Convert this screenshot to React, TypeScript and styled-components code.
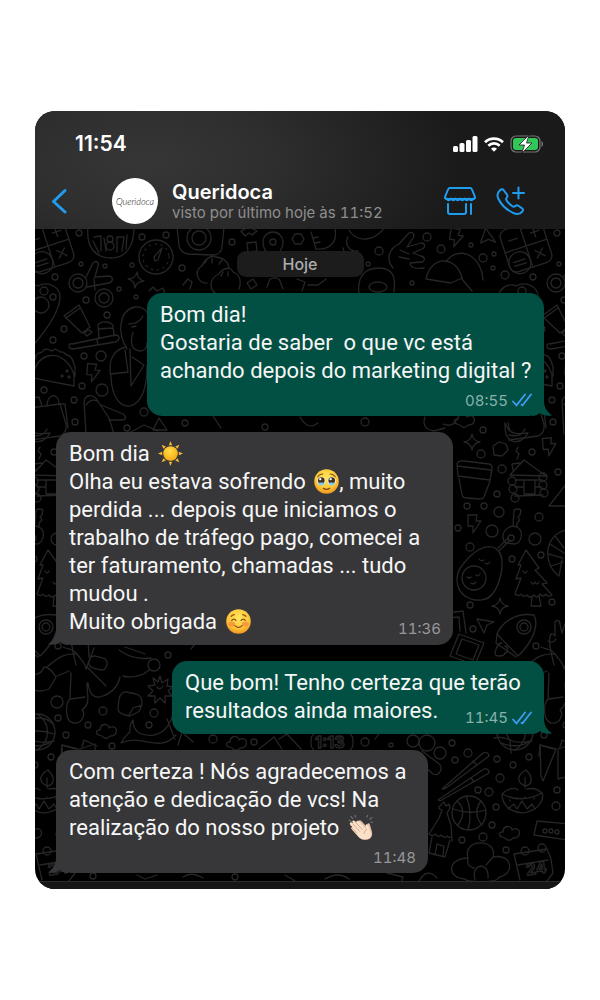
import React from "react";
import styled, { createGlobalStyle } from "styled-components";

const GlobalStyle = createGlobalStyle`
  * { box-sizing: border-box; }
  body {
    margin: 0;
    background: #fff;
    font-family: Inter, "Liberation Sans", sans-serif;
    -webkit-font-smoothing: antialiased;
  }
`;

const Page = styled.main`
  padding: 111px 35px;
`;

const Phone = styled.section`
  display: flex;
  flex-direction: column;
  overflow: hidden;
  border-radius: 20px;
  background: #000;
`;

const Header = styled.header`
  display: flex;
  flex-direction: column;
  height: 118px;
  background: radial-gradient(ellipse 320px 150px at 110px 50px, #363636 0%, #2e2e2e 40%, #1a1a1a 100%);
`;

const StatusBar = styled.div`
  display: flex;
  align-items: center;
  justify-content: space-between;
  height: 64px;
  padding: 2px 21px 0 40px;
`;

const Clock = styled.time`
  color: #fff;
  font-size: 21px;
  font-weight: 600;
  line-height: 24px;
`;

const StatusIcons = styled.div`
  display: flex;
  align-items: center;
  gap: 6px;
`;

const NavBar = styled.nav`
  display: flex;
  align-items: center;
  height: 52px;
  padding: 0 39px 0 14px;
`;

const IconButton = styled.button`
  display: flex;
  flex: none;
  padding: 0;
  border: 0;
  background: none;
  color: #1f9cee;
  cursor: pointer;
`;

const Avatar = styled.div`
  display: flex;
  flex: none;
  align-items: center;
  justify-content: center;
  width: 46px;
  height: 46px;
  margin-left: 41px;
  border-radius: 50%;
  background: #fff;
  color: #111;
  font-family: Lato, "Liberation Sans", sans-serif;
  font-size: 9px;
  font-style: italic;
  font-weight: 300;
`;

const Contact = styled.div`
  flex: 1;
  min-width: 0;
  margin: 2px 0 0 14px;
`;

const Name = styled.h1`
  margin: 0;
  color: #fff;
  font-size: 20px;
  font-weight: 600;
  line-height: 22px;
`;

const LastSeen = styled.p`
  margin: 0;
  color: #8e8e90;
  font-size: 15px;
  font-variant-numeric: tabular-nums;
  line-height: 20px;
  white-space: nowrap;
`;

const Actions = styled.div`
  display: flex;
  gap: 20px;
`;

const Chat = styled.div`
  position: relative;
  overflow: hidden;
  padding: 22px 21px 8px;
`;

const Wallpaper = styled.svg`
  position: absolute;
  inset: 0;
  width: 100%;
  height: 100%;
`;

const Thread = styled.div`
  position: relative;
  display: flex;
  flex-direction: column;
  gap: 16px;
`;

const DayLabel = styled.div`
  align-self: center;
  width: 127px;
  border-radius: 9px;
  background: #1c1c1c;
  color: #adadad;
  font-size: 16px;
  font-weight: 500;
  line-height: 26px;
  text-align: center;
`;

const Bubble = styled.article<{ $sent?: boolean; $width: number }>`
  position: relative;
  display: flow-root;
  align-self: ${(p) => (p.$sent ? "flex-end" : "flex-start")};
  width: ${(p) => p.$width}px;
  max-width: 100%;
  padding: 8px 12px 5px 13px;
  border-radius: 15px;
  background: ${(p) => (p.$sent ? "#025044" : "#373739")};
  color: ${(p) => (p.$sent ? "#025044" : "#373739")};
`;

const Body = styled.p`
  display: flow-root;
  margin: 0;
  color: #f6f6f6;
  font-family: Roboto, Inter, sans-serif;
  font-size: 22px;
  line-height: 28px;
  white-space: pre-wrap;
`;

const Line = styled.span`
  display: block;
`;

/* Sent time: on a row of its own, or floated into the end of the last line. */
const Meta = styled.span<{ $inline?: boolean; $sent?: boolean }>`
  display: flex;
  align-items: center;
  justify-content: flex-end;
  gap: 4px;
  height: 22px;
  margin-top: ${(p) => (p.$inline ? "10px" : "4px")};
  ${(p) => (p.$inline ? "float: right;" : "")}
  color: ${(p) => (p.$sent ? "#8ab0aa" : "#98989a")};
  font-family: Inter, sans-serif;
  font-size: 15px;
  font-variant-numeric: tabular-nums;
`;

const TailShape = styled.svg<{ $sent?: boolean }>`
  position: absolute;
  bottom: 0;
  ${(p) => (p.$sent ? "right: -8px;" : "left: -8px; transform: scaleX(-1);")}
`;

const EmojiIcon = styled.svg`
  width: 25px;
  height: 25px;
  margin-left: 3px;
  vertical-align: -5px;
`;

const Composer = styled.div`
  height: 8px;
  border-top: 1px solid #2c2c2c;
  background: #161616;
`;

const Tail = ({ sent }: { sent?: boolean }) => (
  <TailShape $sent={sent} width="24" height="24" viewBox="0 0 24 24" aria-hidden="true">
    <path d="M4 4h12v5c0 6 3 11 8 14.500c-5 .5-9 0-12-2.500c-2 2-5 3-8 3z" fill="currentColor" />
  </TailShape>
);

const Ticks = () => (
  <svg width="20" height="14" viewBox="0 0 20 14" fill="none" stroke="#3d9bf0" strokeWidth="1.8" strokeLinecap="round" role="img" aria-label="Lida">
    <path d="M1 8.500l3.500 3.800L13 1.500M9.500 11.800l1 .5L19 1.500" />
  </svg>
);

const Sun = () => (
  <EmojiIcon viewBox="0 0 24 24" role="img" aria-label="sol">
    <defs>
      <radialGradient id="sun" cx="45%" cy="35%">
        <stop offset="0" stopColor="#ffe04a" />
        <stop offset="1" stopColor="#fbb41c" />
      </radialGradient>
    </defs>
    {[0, 45, 90, 135, 180, 225, 270, 315].map((a) => (
      <path key={a} d="M12 0l1.600 4h-3.200z" fill="#f6b83c" transform={`rotate(${a} 12 12)`} />
    ))}
    <circle cx="12" cy="12" r="7" fill="url(#sun)" />
  </EmojiIcon>
);

const FaceGradient = ({ id }: { id: string }) => (
  <defs>
    <radialGradient id={id} cx="50%" cy="35%" r="65%">
      <stop offset="0" stopColor="#ffe65c" />
      <stop offset=".65" stopColor="#fdc83a" />
      <stop offset="1" stopColor="#ee931f" />
    </radialGradient>
  </defs>
);

const Pleading = () => (
  <EmojiIcon viewBox="0 0 24 24" role="img" aria-label="rosto segurando as lágrimas">
    <FaceGradient id="face-a" />
    <circle cx="12" cy="12" r="11.800" fill="url(#face-a)" />
    <path d="M3.500 7.500c1.200-1.800 3-2.700 5-2.700M20.500 7.500c-1.200-1.800-3-2.700-5-2.700" stroke="#8a5417" strokeWidth="1" fill="none" strokeLinecap="round" />
    {[7, 17].map((x) => (
      <g key={x}>
        <circle cx={x} cy="11.500" r="3.900" fill="#f4fbff" />
        <circle cx={x} cy="11" r="3.200" fill="#43301e" />
        <circle cx={x - 1} cy="9.800" r="1.100" fill="#fff" />
        <path d={`M${x - 3.4} 13.500q3.400-1 6.800 0q-1 2.300-3.400 2.300t-3.400-2.300z`} fill="#7bc9f2" />
      </g>
    ))}
    <path d="M9 18.500q3 2.200 6 0" stroke="#7c3d12" strokeWidth="1.200" fill="none" strokeLinecap="round" />
  </EmojiIcon>
);

const Smiling = () => (
  <EmojiIcon viewBox="0 0 24 24" role="img" aria-label="rosto sorridente">
    <FaceGradient id="face-b" />
    <circle cx="12" cy="12" r="11.800" fill="url(#face-b)" />
    <ellipse cx="5.500" cy="14.500" rx="3.200" ry="2.400" fill="#f5763c" opacity=".6" />
    <ellipse cx="18.500" cy="14.500" rx="3.200" ry="2.400" fill="#f5763c" opacity=".6" />
    <path d="M5.500 11q2-2.800 4 0M14.500 11q2-2.800 4 0M8.500 16q3.500 3.400 7 0M5 7q1.500-1.500 3-1.500M19 7q-1.500-1.500-3-1.500" stroke="#8a4a14" strokeWidth="1.200" fill="none" strokeLinecap="round" />
  </EmojiIcon>
);

const Clapping = () => (
  <EmojiIcon viewBox="0 0 24 24" role="img" aria-label="palmas">
    <path d="M1 5l2 1M3 1.500l1.500 2M7 0v2M18 2l1-1.800M21 4l2-1.500M22 7h1.800" stroke="#737375" strokeWidth="1.100" strokeLinecap="round" />
    <path d="M10 5.500c1-1 2-.5 3 .5l6 6.500-.3-3.500c0-1.500 1.800-1.500 2.300 0l2 7c.8 4-1 7-4.500 7.500z" fill="#e7bfa4" />
    <path d="M2 9c-1-1.500.7-2.700 1.800-1.700L5 8.500 4.200 6.800C3.800 5.200 5.800 4.800 6.800 6l1.200 1.200C7.700 5.500 9.700 5 10.700 6.300l6.800 7.500-.5-3.600c0-1.700 2-1.700 2.600-.2l2.200 7.200c1 4-2.600 6.800-6.300 6.600-2.500-.2-4.200-1.500-6-3.500l-6-6.600c-1.200-1.500.3-2.700 1.500-1.700L2.500 10z" fill="#fbe0ca" />
    <path d="M4.500 8.500l6.500 7M7.500 7.200l6.200 6.700M4 12.500l4.500 4.800M18 13.800q-2.500 1-2.500 3.700" stroke="#cf9f81" strokeWidth=".8" fill="none" strokeLinecap="round" />
  </EmojiIcon>
);

const bubblesOfAir: [number, number, number][] = [
  [44, 4, 3], [46, 35, 2], [20, 48, 3], [97, 36, 2], [107, 8, 3], [131, 6, 3], [147, 39, 3], [70, 37, 2], [197, 13, 3],
  [392, 8, 4], [406, 20, 4], [344, 22, 4], [333, 35, 2], [377, 54, 2], [436, 16, 2], [448, 29, 4], [459, 25, 2],
  [458, 39, 2], [470, 46, 4], [84, 60, 2], [101, 68, 2], [51, 71, 3], [72, 86, 3], [29, 100, 3], [18, 111, 3],
  [49, 127, 3], [66, 127, 5], [9, 161, 3], [47, 157, 3], [67, 161, 6], [39, 171, 3], [40, 193, 3], [92, 199, 3],
  [109, 183, 4], [448, 201, 3], [446, 225, 4], [467, 240, 4], [497, 223, 3], [523, 243, 3], [462, 265, 3],
  [432, 277, 3], [449, 277, 3], [464, 283, 5], [504, 288, 4], [423, 299, 3], [457, 302, 6], [500, 310, 6],
  [435, 318, 4], [506, 326, 3], [477, 330, 3], [435, 376, 3], [517, 373, 3], [438, 400, 3], [501, 417, 3],
  [133, 426, 3], [22, 473, 6], [68, 482, 4], [23, 489, 3], [53, 496, 3], [31, 506, 3], [119, 484, 4], [114, 496, 3],
  [77, 517, 3], [178, 510, 4], [219, 513, 3], [330, 513, 4], [356, 516, 2], [417, 514, 3], [433, 524, 4],
  [420, 531, 3], [462, 530, 3], [478, 536, 3], [494, 528, 3], [465, 549, 4], [454, 563, 4], [443, 561, 3],
  [461, 578, 3], [522, 561, 3], [521, 577, 4], [457, 596, 3], [448, 608, 4], [427, 611, 3], [471, 621, 3],
  [58, 647, 3], [200, 648, 3], [230, 198, 3], [150, 194, 3], [330, 193, 4],
];

const at = (x: number, y: number, r = 0) => `translate(${x} ${y}) rotate(${r})`;
const BOLT = "M-6-8h9l-1 6h5L-1 10l0-7h-5z";
const SPARKLE = "M0-8q1 7 8 8q-7 1-8 8q-1-7-8-8q7-1 8-8z";
const CLOUD = "M-8 5c-4-1-3-6 1-5c0-7 9-7 9-2c4-3 9 0 7 5c-1 3-4 3-6 3c-2 3-6 3-8 0z";
const PLANE = "M-8-6L9-3L2 0L-1 8z";

/* One repeat of the doodle wallpaper. */
const Doodles = () => (
  <g id="doodles">
    {bubblesOfAir.map(([x, y, r]) => (
      <circle key={`${x}-${y}`} cx={x} cy={y} r={r} />
    ))}
    {/* calculator */}
    <g transform={at(491, 17, -18)}>
      <rect x="-22" y="-22" width="44" height="44" rx="7" />
      <path d="M0-22v44M-22 0h44M-15-10h9M8-11h9M12-15v9M7 7l8 8M15 7l-8 8M-17 12h12M-17 16h12" />
      <circle cx="-11" cy="14" r="11" />
    </g>
    {/* drum */}
    <path d="M53-2C51 18 60 29 76 29S99 16 99-2M59 8l7-1v15M58 12l6 12M71 22l-2-13M82 8l7 0-2 14M82 8v15M92 6l-1 14" />
    <circle cx="75" cy="10" r="3" /><circle cx="75" cy="17" r="4" />
    {/* timer */}
    <circle cx="121" cy="28" r="17" /><circle cx="121" cy="28" r="13" strokeDasharray="1 5" />
    <path d="M120 32l-1-4 8-9-4 12z" />
    {/* camera */}
    <path d="M142-3l2 20q2 7 9 8l25 1q8 0 9-8l2-20" />
    <circle cx="164" cy="9" r="12" /><circle cx="164" cy="9" r="7" />
    {/* dumplings */}
    <path d="M172 54c-9 1-14-12-5-17 2-6 10-12 13-9 7 0 13 4 14 11M180 64c-7-6-4-16 4-19 4-7 12-7 14-2 6 2 9 8 6 17M170 34l2-4M177 34v-5M184 35l3-4M186 47l2-4M193 47v-4" />
    {/* pin, nut and box */}
    <path d="M238 31c-8-9-10-12-10-18a10 10 0 0 1 20 0c0 6-3 10-10 18z" /><circle cx="238" cy="13" r="3" />
    <path d="M260 5h6l3 5-3 5h-6l-3-5zM212 14l9-1 1 9-9 1zM206 2l8-4 8 4-5 4-3-2-4 3z" />
    {/* small shapes under the day label */}
    <path d="M212 54l6-4 4 6-6 4zM232 58l3-8q8-3 10 2l3 8M262 50l8 3-3 9" />
    {/* jug, moon, bowl */}
    <path d="M276 3l5 17q9 1 15-4 6-5 4-16M278 9l5-1M280 14l5-1M313 8c-4 8 2 15 10 14c-4 8-14 4-15-3M314 1q6 10 17 9 11-1 19-12" />
    {/* horns hand */}
    <path d="M358 39c-8-10-3-20 6-24l10-11c4-2 6 2 4 5l-6 9 14-4c5 0 4 5 1 6l-9 4 8 3c5 1 4 7-1 6l-10 1c0 5 6 6 14 5M365 21l9 4M364 28l10 2" />
    <path d={BOLT} transform={at(421, 8, 8)} /><path d={PLANE} transform={at(452, 9, 45)} />
    {/* fortune cookies */}
    <path d="M391 50c5-24 30-24 36-1l-11 5zM411 33c10-16 35-10 37 18M427 50l10 12M273 56l10 0 8-6" />
    <path d="M324 65c-2-17 5-26 20-26 14 0 17 9 15 24" /><ellipse cx="343" cy="58" rx="9" ry="5" />
    {/* scissors */}
    <circle cx="43" cy="54" r="9" /><circle cx="43" cy="54" r="5" />
    <circle cx="69" cy="69" r="9" /><circle cx="69" cy="69" r="5" />
    <path d="M51 48l7-14c3-3 6-1 5 3l-3 11 14-1c5 1 4 6 0 7l-22 4M60 61l-1-12" />
    <path d={SPARKLE} transform={at(101, 51, 8)} />
    <path d="M114 62l4-4 4 4 6-3 2 6M148 56l5-6 4 3-2 7" />
    {/* paw */}
    <path d="M-14 72c-2-14 10-18 17-15 11-6 23 2 22 12-1 14-13 32-31 52-6-16-9-37-8-49z" />
    <circle cx="9" cy="62" r="4" /><circle cx="18" cy="68" r="3" /><circle cx="6" cy="76" r="8" />
    {/* tube and toothbrush */}
    <path d="M29 87l15-11 11 22-8 6zM31 89l14-10M49 104l5-3 3 2-5 4z" />
    <path d="M37 115l43-9q4 0 4 3t-4 4l-42 7q-4 0-4-3t3-2zM62 111l1 5M64 109l-1-13q2-4 9-3 5 1 6 4l1 10M63 100l15-1" />
    {/* taco */}
    <path d="M-2 149c2-29 33-30 41-3v11zM1 130c-2-6 5-6 6-7 3-5 7-2 10-1 3-3 6-1 8 1 4-1 5 2 7 3 5 1 6 6 8 12v9" />
    <circle cx="27" cy="147" r="1" /><circle cx="32" cy="142" r="1" /><circle cx="34" cy="148" r="1" />
    <path d={BOLT} transform={at(58, 143, 4)} />
    {/* mouse */}
    <path d="M76 148c-4-18 4-28 15-30M76 148c1 22 10 30 19 29 12-3 17-17 17-41M76 145l17-2-3-22M95 120l1 37 13-21-12-8" />
    {/* head */}
    <path d="M92 120c-11-18-7-39 8-42 13-1 18 12 13 24M94 95c8 0 12-4 14-8M97 98l4-1M98 103c-4 14 0 18 7 19 6 0 7-4 7-8" />
    {/* shuttle and lunchbox */}
    <path d="M51 205l-2-32c1-8 9-8 13-2l12 18 5 16M51 176q5-7 11-4M66 176l22 9c4 3 3 6-1 6l-13 0" />
    <path d="M-4 179l29-4 6 20q1 9-6 12l-29 4M0 179l-2-10 6-1 3 9M12 177c0-12 11-14 12-3M-4 206q12 3 16-6M26 175l4 0 3 24M94 204l15-8 14 6" />
    {/* shapes between the first two messages */}
    <path d="M124 189l-6 12h14zM178 187l8 12M265 188q8 14 18 6M390 188q-4 12 9 14l11-3M408 195q10 4 14-5" />
    <path d={CLOUD} transform={at(430, 190)} />
    <path d="M470 194c-1 24 17 22 23 10M470 194l3 6c5 7 14 4 20 4M473 194l2 8" />
    <path d={SPARKLE} transform={at(437, 213)} /><path d={BOLT} transform={at(514, 217, -5)} />
    <path d="M458 217l6-4 7 2 2 6-6 6-8-1z" />
    {/* flower pot */}
    <path d="M422 235q1-4 7-3l25 3q4 1 3 5l-2 11-32-4zM424 249l3 17q1 3 5 3l13 1q3 0 4-2l6-16M422 237l34 4" />
    {/* log cabin */}
    <path d="M475 246l14-15 22 16zM478 241l-1-6 8-1M482 230l2-5-3-3 2-4M480 251h27M480 258h9M501 258h6M480 267l28-1M489 251h11v14h-11z" />
    {[[477, 252], [478, 260], [480, 269], [508, 248], [508, 256], [509, 264]].map(([x, y]) => (
      <circle key={`${x}-${y}`} cx={x} cy={y} r="4" />
    ))}
    <path d={BOLT} transform={at(439, 294)} />
    {/* key */}
    <path d="M478 297l1-16q4-2 7 0l-1 5-2 2 2 3-3 3 0 4M478 297c-10 2-13 12-7 17l9 1c7-2 9-13 2-17z" />
    <circle cx="476" cy="309" r="3" /><path d="M475 311l-11 11M473 309l-10 10" />
    {/* avocado */}
    <path d="M460 319c-10-5-22 4-31 15-12 13-8 31 7 36 14 4 23-2 28-18 5-15 4-28-4-33zM464 323c7 7 2 38-12 47" />
    <circle cx="439" cy="349" r="12" /><path d="M432 348q2 2 4 0M441 346q2 2 4-1M436 354q3 2 5-1M444 330q2 3 5 1M450 334q3 2 5-1" />
    {/* fir tree */}
    <path d="M491 321l13 18-4 2 12 13-5 1 10 11q-4 3-6-1-3 4-6 0-3 5-6 1-4 4-7 0-4 3-6-1-2 3-6 0l6-16-5 1 5-14-3 0zM497 368l-1 9 10 0-2-10M488 342q2 4 4 0M496 353q2 4 4 0 2 4 4 0" />
    <path d={SPARKLE} transform={at(465, 377)} /><path d={PLANE} transform={at(450, 396)} />
    {/* rocket */}
    <path d="M462 405c4-10 17-22 37-19 6 12-4 30-16 41zM462 405l-1 9 20 14M467 414c-5 0-6 6-7 10-1 4 9 4 10 0 4-1 3-7 0-7" />
    <circle cx="489" cy="398" r="7" /><circle cx="489" cy="398" r="4" />
    <path d="M424 405l25 9-9 22-25-9zM427 410l17 6-6 15-17-6zM413 384l15-2 3 22M414 389l10-1 1 14" />
    {/* croissant, hand, tent */}
    <path d="M532 301c-23 4-25 34-8 46l3-16M515 315l14 9M514 325l14 4M520 307l9 12M516 337l12-4M514 277l18-23M514 277h22" />
    <path d="M519 436c-3-14-6-22-4-28 0-4 4-4 5-1l0-13c0-4 5-3 5 1l2 9 3-9c2-3 5-1 4 2l-3 12 1 19M513 412q5 3 8-2" />
    {/* runner */}
    <path d="M-2 446q9-1 11-8 6 0 12 10l-7 12q-11 4-16 0M22 447l12-5M12 438C24 428 29 424 42 425c-2-4-6-4-14-7M42 425c5 7 9 10 9 15l8-21M36 444l-1 26c-5 5-5 22 3 24 11 1 12-10 9-13 9-7 5-13 5-27M36 470l14-2M53 454q2 16 12 14 17-5 20-20M52 438l19 19M88 447c12 3 22-2 26-6M84 421c8 6 18 10 32 8M90 418l20 7" />
    <circle cx="119" cy="436" r="6" />
    <rect x="54" y="428" width="18" height="12" rx="5" transform="rotate(15 63 434)" />
    <path d="M125 447l2 7 6-4-1 7 6 1-5 4 4 5-7 0 0 7-5-5-5 5 0-7-7 0 5-5-5-5 7-1-2-7 5 4zM122 458q3 4 6-1" />
    <path d="M84 470q2-8 8-7l9 2q6 2 6 8-1 8-4 10l-8 4q-12-2-12-7zM94 486l4-7 9-3" />
    {/* globe, whale, cloud, cat */}
    <circle cx="2" cy="503" r="18" /><path d="M2 485c14 9 14 27 0 36M-14 495q20-12 32 0M-16 505q20-6 35 0M-12 514q16 6 28-1" />
    <path d="M86 514c3-5 5-8 9-11q-1-7 3-12 0 9 6 13c17 7 34-2 35-29M86 514c21-10 38 11 55-8M132 490l8 20M143 516l4-13 11 10" />
    <path d={CLOUD} transform={at(72, 501)} /><path d={CLOUD} transform={at(202, 513)} />
    <path d="M26 527l1-11 13 4M47 518l2-7 13 6M156 420l8-10M224 520l15-12 8 12M244 510l8-5 14 15" />
    {/* badge, caterpillar */}
    <rect x="276" y="503" width="42" height="20" rx="8" />
    <path d="M340 510q7-10 16-13" /><circle cx="378" cy="512" r="6" /><circle cx="392" cy="514" r="8" /><circle cx="405" cy="524" r="6" />
    <path d="M387 522l16 12c6 4 2 14-5 11l-9-8" />
    {/* chopsticks */}
    <path d="M407 560l41-36q5-2 6 3l-43 32zM403 571l46-31q5-1 5 4l-49 28zM438 532l4 4M436 549l3 4" />
    {/* basketball */}
    <path d="M472 485q-4 18 3 26 8 4 22 1M459 509q8-2 16 2l1 13" />
    <circle cx="434" cy="584" r="17" /><path d="M418 580q16 6 33 1M431 567q7 16 2 34M422 572q11 10 1 24M446 572q-9 12 1 24" />
    {/* oil lamp */}
    <path d="M467 565q20 10 40-1c3 6-4 16-12 18-10 5-28-1-28-17zM467 565c6-6 13-7 16-4M507 564q-6-6-15-4M490 557c-9-4-8-11 1-16 8 8 6 15-1 16zM490 549v10M473 580l6-5 3 5 5-8 5 8 5-5 3 5" />
    <path d="M475 571v1M482 569v1M490 568v1M499 569v1" />
    {/* cards */}
    <path d="M505 516l16 4-13 32-2-5zM523 520l15-5v31l-15 4z" />
    {/* hut */}
    <path d="M394 605l10-16 3-8q-6-2-1-5l3-3 2 4 3-2 1 4-3 5 4 12 1 16M394 605q4 3 6 0 4 4 6 1 4 4 6 1 3 3 5 0M397 608l-3 16 16 4 5-17M400 626l2-11 7 2-1 10" />
    <path d={CLOUD} transform={at(475, 603)} />
    <path d="M502 592l32 3M499 606l3-14M499 606l34 5" />
    <circle cx="510" cy="602" r="2" /><circle cx="516" cy="602" r="2" /><circle cx="522" cy="603" r="2" />
    {/* flower */}
    <path d="M433 629c-6-20 30-20 25-1 20-4 22 18 6 20 0 6-32 6-34 2-18-1-19-20 3-21M433 629q-2 8 6 10M458 628l-7 8M446 637q-9 2-6 14M446 637q8 1 7 12" />
    {/* calendar */}
    <path d="M479 625l33-5 4 10M479 625l6 26M516 630l2 14-6 8M483 636l30-5" />
    <circle cx="490" cy="622" r="4" /><circle cx="507" cy="619" r="4" />
    <path d="M102 646l8 4 12-4M148 648q8-6 20 1M250 646l10 6M290 650q14-8 24 0M352 644l16 4-2 6M384 652q8-14 18-3" />
  </g>
);

const DoodleText = styled.text`
  fill: none;
  font-family: Inter, sans-serif;
  font-size: 16px;
  font-weight: 700;
`;

const App = () => (
  <>
    <GlobalStyle />
    <Page>
      <Phone>
        <Header>
          <StatusBar>
            <Clock>11:54</Clock>
            <StatusIcons>
              <svg width="25" height="16" viewBox="0 0 25 16" fill="#fff" aria-hidden="true">
                <rect x="0" y="10" width="5" height="6" rx="1.500" />
                <rect x="6.500" y="7" width="5" height="9" rx="1.500" />
                <rect x="13" y="4" width="5" height="12" rx="1.500" />
                <rect x="19.500" y="0" width="5" height="16" rx="1.500" />
              </svg>
              <svg width="20" height="15" viewBox="0 0 20 15" fill="none" stroke="#fff" strokeWidth="2.700" aria-hidden="true">
                <path d="M1 5.200c5-4.800 13-4.800 18 0M4.300 8.700c3.300-3 8.100-3 11.400 0" />
                <path d="M10 14.800l-3-3.100c1.700-1.500 4.300-1.500 6 0z" fill="#fff" stroke="none" />
              </svg>
              <svg width="34" height="18" viewBox="0 0 34 18" aria-hidden="true">
                <rect x="1" y="1" width="29" height="16" rx="5" fill="none" stroke="#777" strokeWidth="1.200" />
                <rect x="3" y="3" width="25" height="12" rx="3" fill="#32c759" />
                <path d="M31.500 6c2 1 2 5 0 6z" fill="#777" />
                <path d="M19 0l-10 10h5.500l-2.500 8 10-10h-5.500z" fill="#fff" stroke="#1a1a1a" strokeWidth=".8" />
              </svg>
            </StatusIcons>
          </StatusBar>
          <NavBar>
            <IconButton aria-label="Voltar">
              <svg width="22" height="26" viewBox="0 0 22 26" fill="none" stroke="currentColor" strokeWidth="3" strokeLinecap="round" strokeLinejoin="round">
                <path d="M16 2.500L4.500 13.500L16 24" />
              </svg>
            </IconButton>
            <Avatar>Queridoca</Avatar>
            <Contact>
              <Name>Queridoca</Name>
              <LastSeen>visto por último hoje às 11:52</LastSeen>
            </Contact>
            <Actions>
              <IconButton aria-label="Loja">
                <svg width="32" height="30" viewBox="0 0 32 30" fill="none" stroke="currentColor" strokeWidth="2" strokeLinecap="round" strokeLinejoin="round">
                  <path d="M6 2h20q1.500 0 2 1.500L31 11q0 2-1.500 2h-27Q1 13 1 11L4 3.500Q4.500 2 6 2z" />
                  <path d="M2.500 12.500q2.200 3.500 4.500 0q2.200 3.500 4.500 0q2.200 3.500 4.500 0q2.200 3.500 4.500 0q2.200 3.500 4.500 0q2.200 3.500 4.500 0" />
                  <path d="M4 18v8q0 2 2 2h14q2 0 2-2v-8M27 18v10" />
                </svg>
              </IconButton>
              <IconButton aria-label="Ligar">
                <svg width="30" height="30" viewBox="0 0 30 30" fill="none" stroke="currentColor" strokeWidth="2" strokeLinecap="round" strokeLinejoin="round">
                  <path d="M7.500 4L11 8.700c.8 1 .6 1.800-.2 2.800c-1 1.200-1 1.900 0 3.300c1.500 2 3.200 3.800 5.300 5.200c1.400 1 2.200 1 3.300 0c1-.9 1.900-1 2.900-.3l3.700 2.600c1.200.9 1.200 1.900.4 3c-2.200 3-5.400 3.500-9.400 1.500C10.600 23.700 5 18.500 2.200 12.500C.8 9 1.500 6.300 4 4.200C5.300 3 6.500 2.800 7.500 4z" />
                  <path d="M22.500 1.500v11M17 7h11" />
                </svg>
              </IconButton>
            </Actions>
          </NavBar>
        </Header>
        <Chat>
          <Wallpaper viewBox="0 0 530 652" preserveAspectRatio="xMidYMin slice" fill="none" stroke="#262626" strokeWidth="1.300" strokeLinecap="round" strokeLinejoin="round" aria-hidden="true">
            <Doodles />
            <use href="#doodles" x="-478" />
            <use href="#doodles" x="478" />
            <DoodleText x="491" y="645" transform="rotate(-8 502 640)">24</DoodleText>
            <DoodleText x="13" y="645" transform="rotate(-8 24 640)">24</DoodleText>
            <DoodleText x="280" y="519">1:13</DoodleText>
          </Wallpaper>
          <Thread>
            <DayLabel>Hoje</DayLabel>
            <Bubble $sent $width={397}>
              <Tail sent />
              <Body>
                <Line>Bom dia!</Line>
                <Line>{"Gostaria de saber  o que vc está"}</Line>
                <Line>achando depois do marketing digital ?</Line>
              </Body>
              <Meta $sent>
                <time>08:55</time>
                <Ticks />
              </Meta>
            </Bubble>
            <Bubble $width={397}>
              <Tail />
              <Body>
                <Line>Bom dia <Sun /></Line>
                <Line>Olha eu estava sofrendo <Pleading />, muito</Line>
                <Line>perdida ... depois que iniciamos o</Line>
                <Line>trabalho de tráfego pago, comecei a</Line>
                <Line>ter faturamento, chamadas ... tudo</Line>
                <Line>mudou .</Line>
                <Line>
                  Muito obrigada <Smiling />
                  <Meta $inline>
                    <time>11:36</time>
                  </Meta>
                </Line>
              </Body>
            </Bubble>
            <Bubble $sent $width={372}>
              <Tail sent />
              <Body>
                <Line>Que bom! Tenho certeza que terão</Line>
                <Line>
                  resultados ainda maiores.
                  <Meta $sent $inline>
                    <time>11:45</time>
                    <Ticks />
                  </Meta>
                </Line>
              </Body>
            </Bubble>
            <Bubble $width={372}>
              <Tail />
              <Body>
                <Line>Com certeza ! Nós agradecemos a</Line>
                <Line>atenção e dedicação de vcs! Na</Line>
                <Line>realização do nosso projeto <Clapping /></Line>
              </Body>
              <Meta>
                <time>11:48</time>
              </Meta>
            </Bubble>
          </Thread>
        </Chat>
        <Composer />
      </Phone>
    </Page>
  </>
);

export default App;
